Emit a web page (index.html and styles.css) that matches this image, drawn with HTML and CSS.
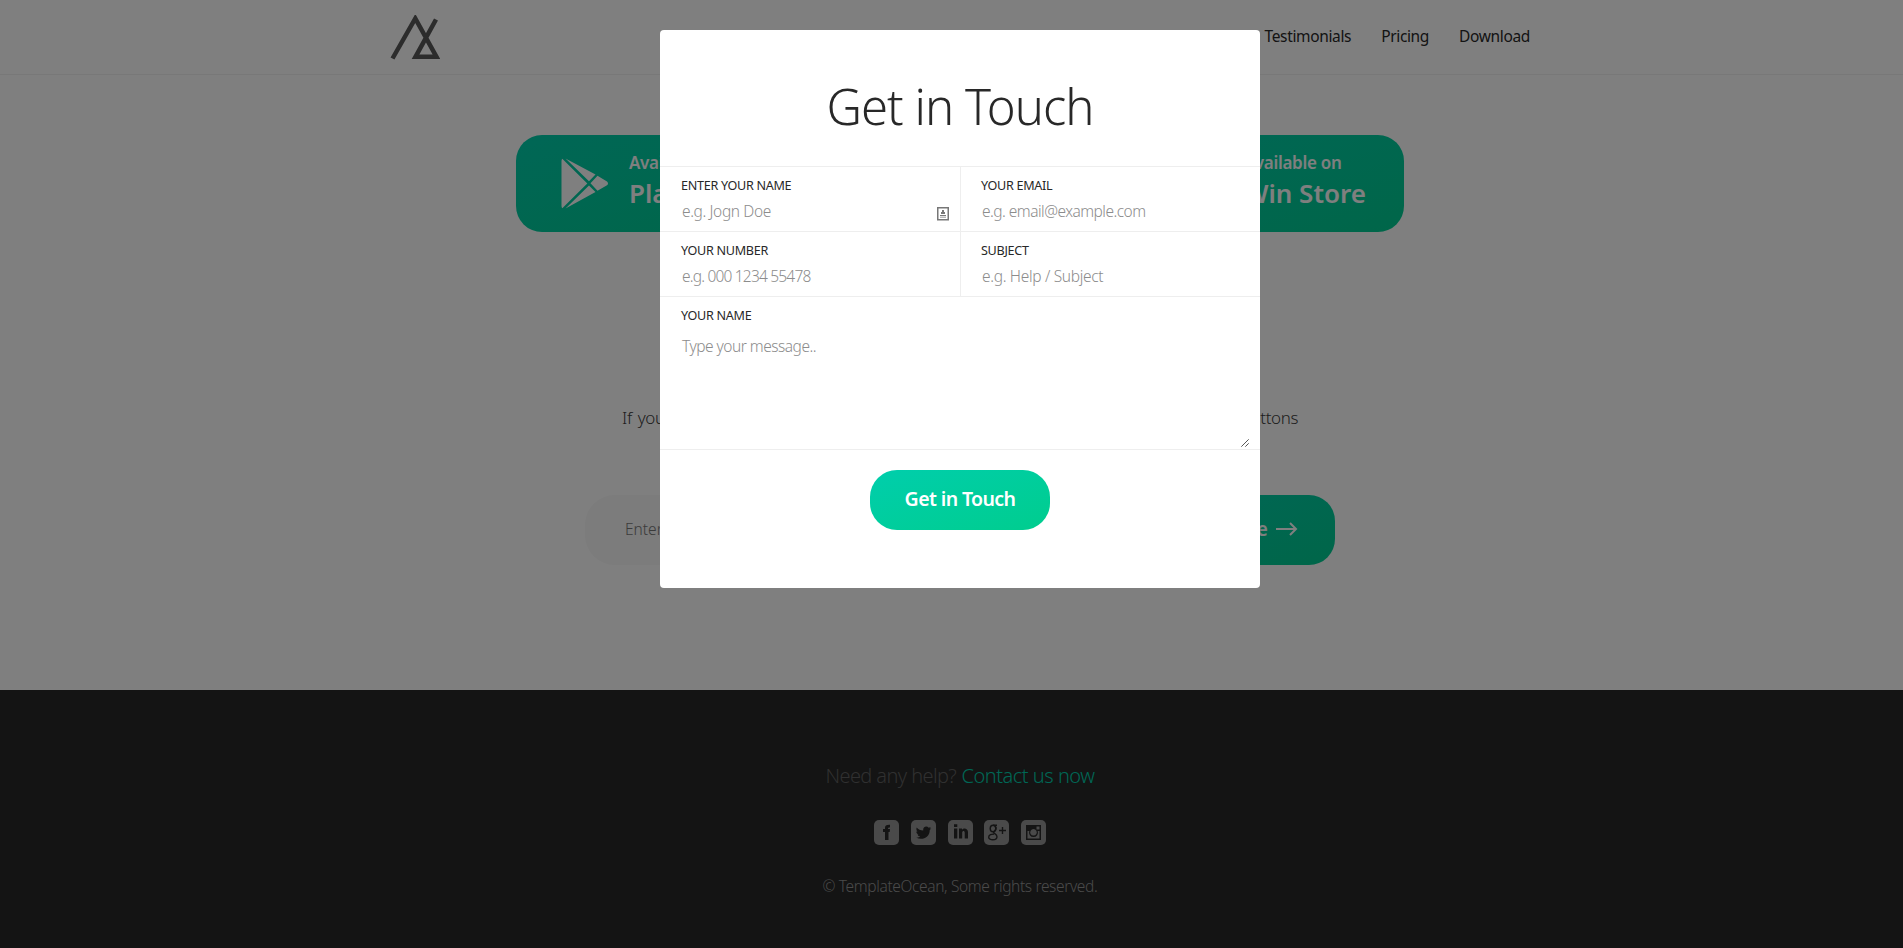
FILE: index.html
```html
<!DOCTYPE html>
<html lang="en">
<head>
<meta charset="utf-8">
<title>Get in Touch</title>
<link rel="stylesheet" href="styles.css">
</head>
<body>
<header class="header">
  <div class="header-inner">
    <svg class="logo" width="50" height="45" viewBox="0 0 50 45" fill="none" stroke="#585858" stroke-width="4.5"><path d="M2.500 43.500 25.300 3.500 46.500 41.800H25.500L46 4.500"/></svg>
    <nav class="nav"><a>Testimonials</a><a>Pricing</a><a>Download</a></nav>
  </div>
</header>
<main class="main">
  <div class="stores">
    <a class="store">
      <svg class="store-icon" width="48" height="51" viewBox="0 0 48 51" fill="#fff"><path d="M1.300.8 26.300 25.500 1.300 50.200Q.5 49.500.5 48V3Q.5 1.500 1.300.8ZM4.500.5 34.500 16.500 28 23.200ZM36.500 17.700 46 23.500Q48 25.500 46 27.300L36.500 32.800 29.500 25.300ZM34.500 34 4.500 50.500 28 27.500Z"/></svg>
      <span class="store-text"><span class="small">Available on</span><span class="big">Play Store</span></span>
    </a>
    <a class="store"><span class="store-text"><span class="small">Available on</span><span class="big">App Store</span></span></a>
    <a class="store store-last"><span class="store-text"><span class="small">Available on</span><span class="big">Win Store</span></span></a>
  </div>
  <p class="lead">If you want to stay updated then subscribe below or get the app with one of the buttons</p>
  <div class="subscribe">
    <span class="email">Enter your email</span>
    <a class="sub-btn">Subscribe<svg width="22" height="14" viewBox="0 0 22 14" fill="none" stroke="#fff" stroke-width="2"><path d="M0 7H20M14 1l6 6-6 6"/></svg></a>
  </div>
</main>
<footer class="footer">
  <p class="help"><span class="help-q">Need any help?</span> <a class="help-link">Contact us now</a></p>
  <div class="social">
    <svg width="25" height="25" viewBox="0 0 25 25"><rect class="tile" width="25" height="25" rx="5"/><path class="ink" d="M11 20v-8H9V9h2V8c0-2.500 1.300-3.500 5-3.300v2.800c-1.500 0-2 .1-2 1.500h2l-.3 3H14.500v8Z"/></svg>
    <svg width="25" height="25" viewBox="0 0 25 25"><rect class="tile" width="25" height="25" rx="5"/><path class="ink" d="M5.700 7.500c1.500 1.900 3.900 3 6.500 3.100C11.600 6.500 15.900 5.500 17.700 7.700l2-.7-1 1.700 1.600-.4-1.600 1.900C18.900 17 11.500 21 5 17.600c2 .2 3.200-.3 4.200-1-1.400-.1-2.300-.9-2.700-2h1.200C6 14 5.300 12.900 5.300 11.500l1.300.3C5.400 10.800 5.100 9 5.700 7.500Z"/></svg>
    <svg width="25" height="25" viewBox="0 0 25 25"><rect class="tile" width="25" height="25" rx="5"/><path class="ink" d="M6 8.500h3.300V18.500H6ZM6 4.200h3.300V7H6ZM11 8.500h3v1.200c1.700-2.200 6-1.500 6 2.300v6.500h-3.300v-6c0-2.200-2.500-2-2.500 0v6H11Z"/></svg>
    <svg width="25" height="25" viewBox="0 0 25 25"><rect class="tile" width="25" height="25" rx="5"/><g class="line"><ellipse cx="9" cy="8.500" rx="2.800" ry="3.200"/><path d="M9 5.300H13M11 6c2 2 1 4-1 5.500-2 1.500 3 2.200 3 5.200 0 4-8.300 4-8.300.5 0-2.500 3-3.200 5.500-3M15 10.500h7M18.500 7v7"/></g></svg>
    <svg width="25" height="25" viewBox="0 0 25 25"><rect class="tile" width="25" height="25" rx="5"/><path class="ink" fill-rule="evenodd" d="M5 5H20V20H5ZM15.500 6.500v3h3v-3ZM6.500 11V18.500h12V11h-1.800a4.500 4.500 0 1 1-8.400 0ZM12.500 9a3.300 3.300 0 1 0 .01 0Z"/></svg>
  </div>
  <p class="copy">© TemplateOcean, Some rights reserved.</p>
</footer>
<div class="overlay">
  <section class="modal">
    <h2 class="title">Get in Touch</h2>
    <form class="form">
      <div class="field"><label>ENTER YOUR NAME</label><span class="ph ph-name">e.g. Jogn Doe</span>
        <svg class="card" width="12" height="14" viewBox="0 0 12 14"><path fill="none" stroke="#777" stroke-width="1.500" d="M.75.75h10.500v12H.75Z"/><path fill="#777" d="M5 3h2v2h1v2H4V5h1ZM3 8h6v1H3ZM3 9.800h6v.8H3Z"/></svg></div>
      <div class="field"><label>YOUR EMAIL</label><span class="ph ph-email">e.g. email@example.com</span></div>
      <div class="field"><label>YOUR NUMBER</label><span class="ph ph-number">e.g. 000 1234 55478</span></div>
      <div class="field"><label>SUBJECT</label><span class="ph ph-subject">e.g. Help / Subject</span></div>
      <div class="field message"><label>YOUR NAME</label><span class="ph ph-message">Type your message..</span>
        <svg class="grip" width="8" height="8" viewBox="0 0 8 8" stroke="#555" stroke-width="1"><path d="M.3 7.700 7.700.3M4.300 7.700 7.700 4.300"/></svg></div>
    </form>
    <a class="submit">Get in Touch</a>
  </section>
</div>
</body>
</html>
```
FILE: styles.css
```css
* { box-sizing: border-box; }
body { margin: 0; height: 948px; overflow: hidden; background: #fff; color: #282828; font-family: "Noto Sans", "Open Sans", sans-serif; font-size: 15.5px; }
p, h2 { margin: 0; font-weight: 300; white-space: nowrap; }
.header { height: 75px; border-bottom: 1px solid #f0f0f0; }
.header-inner { width: 1140px; margin: 0 0 0 390px; display: flex; justify-content: space-between; padding-top: 15px; }
.nav { display: flex; gap: 30px; line-height: 22px; padding-top: 10px; letter-spacing: -0.35px; }
.nav a { color: #282828; white-space: nowrap; }
.stores { margin: 60px 0 0 516px; width: 888px; height: 97px; display: grid; grid-template-columns: repeat(3, 1fr); }
.store { display: flex; background: linear-gradient(160deg, #00ceac, #00cd92); color: #fff; font-weight: 600; padding: 23px 0 0 45px; }
.store:first-child { border-radius: 26px 0 0 26px; }
.store-last { border-radius: 0 26px 26px 0; justify-content: flex-end; padding: 23px 38px 0 0; }
.store-icon { margin-right: 20px; flex: none; }
.store-text { display: flex; flex-direction: column; white-space: nowrap; margin-top: -6px; }
.small { font-size: 17px; line-height: 22px; letter-spacing: -0.3px; }
.big { font-size: 26px; line-height: 38px; }
.lead { margin: 171px 0 0 622px; width: 676px; font-size: 17px; line-height: 30px; text-align-last: justify; letter-spacing: -0.4px; color: #3c3c3c; }
.subscribe { margin: 62px 0 0 585px; width: 750px; height: 70px; display: flex; }
.email { flex: 1; background: #f8f8f8; border-radius: 30px 0 0 30px; padding-left: 40px; line-height: 68px; color: #777; font-weight: 300; }
.sub-btn { width: 200px; border-radius: 0 26px 26px 0; background: linear-gradient(160deg, #00ceac, #00cd92); color: #fff; font-weight: 600; font-size: 19px; display: flex; justify-content: flex-end; align-items: center; gap: 8px; padding: 0 37px 3px 0; }
.footer { margin-top: 125px; height: 258px; background: #282828; display: flex; flex-direction: column; align-items: center; padding: 71px 0 0 17px; }
.help { font-size: 20px; line-height: 30px; color: #606060; }
.help-q { letter-spacing: -0.6px; }
.help-link { color: #00ceac; letter-spacing: -0.48px; }
.social { display: flex; width: 172px; justify-content: space-between; margin-top: 29px; }
.social svg { display: block; }
.tile { fill: #959595; }
.ink { fill: #282828; }
.line { fill: none; stroke: #282828; stroke-width: 1.4; }
.copy { line-height: 22px; margin-top: 30px; color: #959595; letter-spacing: -0.36px; }
.overlay { position: absolute; inset: 0; height: 948px; background: rgba(0,0,0,.5); }
.modal { width: 600px; height: 558px; margin: 30px 0 0 660px; background: #fff; border-radius: 4px; display: flex; flex-direction: column; align-items: center; }
.title { height: 136px; width: 100%; text-align: center; font-size: 49px; line-height: 60px; padding-top: 46px; letter-spacing: -0.95px; }
.form { width: 600px; display: grid; grid-template-columns: 300px 300px; grid-template-rows: 65px 65px 153px; border-bottom: 1px solid #eee; }
.field { position: relative; border-top: 1px solid #eee; padding: 10px 0 0 21px; display: flex; flex-direction: column; align-items: flex-start; white-space: nowrap; }
.field:nth-child(even) { border-left: 1px solid #eee; padding-left: 20px; }
.message { grid-column: span 2; }
label { font-size: 12.6px; line-height: 18px; letter-spacing: -0.3px; }
.ph { color: #8c8c8c; font-weight: 300; line-height: 22px; margin: 5px 0 0 1px; }
.ph-name { letter-spacing: -0.37px; }
.ph-email { letter-spacing: -0.52px; }
.ph-number { letter-spacing: -0.8px; }
.ph-subject { letter-spacing: -0.32px; }
.ph-message { margin-top: 10px; letter-spacing: -0.5px; }
.card { position: absolute; left: 277px; top: 40px; }
.grip { position: absolute; right: 11px; bottom: 2px; }
.submit { margin-top: 20px; width: 180px; height: 60px; border-radius: 27px; background: linear-gradient(160deg, #00ceac, #00cd8e); color: #fff; text-align: center; font-weight: 600; font-size: 19.5px; line-height: 57px; white-space: nowrap; letter-spacing: -0.6px; }
```
